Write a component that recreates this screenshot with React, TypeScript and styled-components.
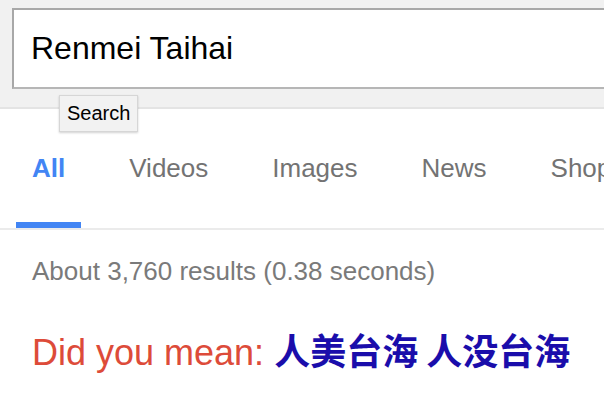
import React from "react";
import styled, { createGlobalStyle } from "styled-components";

const GlobalStyle = createGlobalStyle`
  html, body {
    margin: 0;
    padding: 0;
    background: #ffffff;
    overflow: hidden;
  }
  body {
    font-family: "Liberation Sans", Arial, Helvetica, sans-serif;
    width: 604px;
    height: 402px;
  }
`;

const Page = styled.div`
  width: 604px;
  height: 402px;
  overflow: hidden;
  display: flex;
  flex-direction: column;
`;

const Header = styled.header`
  position: relative;
  flex: none;
  height: 99px;
  background: #f1f1f1;
  border-bottom: 2px solid #e4e4e4;
  padding: 8px 0 0 12px;
  box-sizing: content-box;
  display: flex;
  align-items: flex-start;
`;

const SearchField = styled.div`
  flex: none;
  width: 700px;
  height: 76px;
  background: #ffffff;
  border: 2px solid #a8a8a8;
  border-bottom-color: #b6b6b6;
  border-right: none;
  display: flex;
  align-items: center;
  padding-left: 17px;
  box-sizing: content-box;
  font-size: 32px;
  color: #000000;
  padding-bottom: 1px;
`;

const Tooltip = styled.div`
  position: absolute;
  left: 59px;
  top: 95px;
  height: 35px;
  padding: 0 7px;
  display: flex;
  align-items: center;
  background: #f2f2f2;
  border: 1px solid #d6d6d6;
  box-shadow: 0 1px 2px rgba(0, 0, 0, 0.18);
  font-size: 20px;
  color: #000000;
  z-index: 2;
`;

const TabBar = styled.nav`
  flex: none;
  display: flex;
  gap: 32px;
  padding-left: 16px;
  border-bottom: 2px solid #ebebeb;
  white-space: nowrap;
`;

const Tab = styled.div<{ $active?: boolean }>`
  flex: none;
  height: 119px;
  box-sizing: border-box;
  padding: 44px 16px 0;
  border-bottom: 6px solid ${(p) => (p.$active ? "#4285f4" : "transparent")};
  font-size: 26px;
  line-height: 30px;
  font-weight: ${(p) => (p.$active ? 700 : 400)};
  color: ${(p) => (p.$active ? "#4285f4" : "#737373")};
`;

const Content = styled.main`
  padding: 26px 0 0 32px;
  display: flex;
  flex-direction: column;
`;

const ResultStats = styled.div`
  font-size: 26px;
  line-height: 30px;
  color: #7a7a7a;
`;

const Suggestion = styled.div`
  margin-top: 41px;
  font-size: 36px;
  line-height: 44px;
  color: #dd4b39;
  white-space: nowrap;
`;

const SuggestionLink = styled.a`
  font-family: "Noto Sans CJK TC", "Noto Sans CJK SC", sans-serif;
  font-weight: 700;
  color: #1a0dab;
  text-decoration: none;
`;

export default function App() {
  return (
    <>
      <GlobalStyle />
      <Page>
        <Header>
          <SearchField>Renmei Taihai</SearchField>
          <Tooltip>Search</Tooltip>
        </Header>
        <TabBar>
          <Tab $active>All</Tab>
          <Tab>Videos</Tab>
          <Tab>Images</Tab>
          <Tab>News</Tab>
          <Tab>Shopping</Tab>
        </TabBar>
        <Content>
          <ResultStats>About 3,760 results (0.38 seconds)</ResultStats>
          <Suggestion>
            Did you mean: <SuggestionLink href="#">人美台海 人没台海</SuggestionLink>
          </Suggestion>
        </Content>
      </Page>
    </>
  );
}
